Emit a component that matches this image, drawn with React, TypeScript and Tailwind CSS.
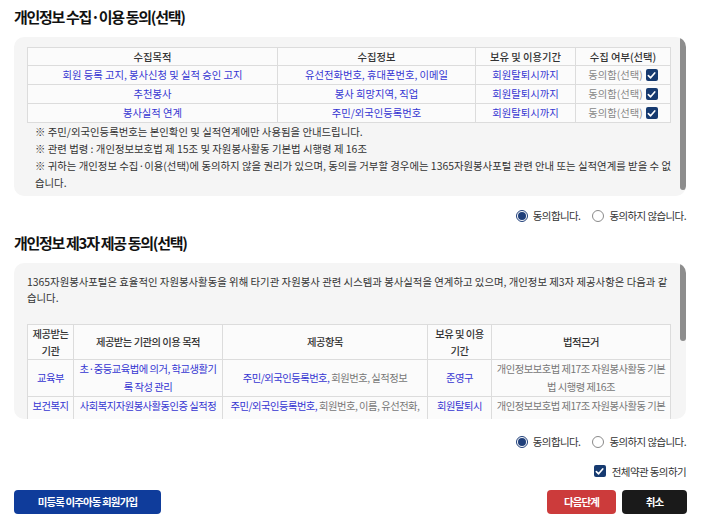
import React from 'react'

const FONT = '"Noto Sans CJK KR", "Noto Sans", sans-serif'

function Check() {
  return (
    <span className="inline-flex w-[12px] h-[12px] items-center justify-center bg-[#163a70] rounded-[2px] align-middle shrink-0">
      <svg width="9" height="9" viewBox="0 0 10 10">
        <path d="M1.5 5.2 L4 7.6 L8.6 2.2" fill="none" stroke="#fff" strokeWidth="1.8" strokeLinecap="round" strokeLinejoin="round" />
      </svg>
    </span>
  )
}

function Radio({ on }: { on?: boolean }) {
  return on ? (
    <span className="inline-flex w-[12px] h-[12px] rounded-full border border-[#1f3f7a] items-center justify-center bg-white">
      <span className="w-[8px] h-[8px] rounded-full bg-[#1f3f7a]" />
    </span>
  ) : (
    <span className="inline-block w-[12px] h-[12px] rounded-full border border-[#8a8a8a] bg-white" />
  )
}

function RadioRow() {
  return (
    <div className="flex justify-end items-center gap-[5px] text-[10.5px] text-[#333] tracking-[-0.6px]">
      <Radio on />
      <span className="mr-[7px]">동의합니다.</span>
      <Radio />
      <span>동의하지 않습니다.</span>
    </div>
  )
}

// scroll box with the thumb drawn over its right edge
function ScrollBox({ h, thumb, children, className }: { h: string; thumb: string; children: React.ReactNode; className: string }) {
  return (
    <div className={`relative ${h} bg-[#f5f5f5] rounded-[10px] overflow-hidden`}>
      <div className={`h-full overflow-hidden pl-[13px] pr-[10px] ${className}`}>{children}</div>
      <div className={`absolute right-0 top-0 w-[6px] ${thumb} rounded-full bg-[#8d8d8d]`} />
    </div>
  )
}

const rows1 = [
  ['회원 등록 고지, 봉사신청 및 실적 승인 고지', '유선전화번호, 휴대폰번호, 이메일'],
  ['추천봉사', '봉사 희망지역, 직업'],
  ['봉사실적 연계', '주민/외국인등록번호'],
]

const rows2 = [
  {
    org: '교육부',
    purpose: '초·중등교육법에 의거, 학교생활기록 작성 관리',
    blue: '주민/외국인등록번호,',
    rest: ' 회원번호, 실적정보',
    term: '준영구',
  },
  {
    org: '보건복지부',
    purpose: '사회복지자원봉사활동인증 실적정보 연계',
    blue: '주민/외국인등록번호,',
    rest: ' 회원번호, 이름, 유선전화, 이메일, 실적정보',
    term: '회원탈퇴시까지',
  },
  {
    org: '행정안전부',
    purpose: '자원봉사센터 봉사실적 관리 및 연계',
    blue: '주민/외국인등록번호,',
    rest: ' 회원번호, 이름, 실적정보',
    term: '회원탈퇴시까지',
  },
]

export default function App() {
  const th = 'border border-[#dcdcdc] font-medium text-[#333] px-[2px] leading-[17px]'
  const td1 = 'border border-[#dcdcdc] px-[2px] leading-[16px] py-0'
  const td2 = 'border border-[#dcdcdc] px-[2px] leading-[18px]'
  return (
    <div className="w-[704px] h-[527px] bg-white overflow-hidden" style={{ fontFamily: FONT }}>
      <div className="pl-[14px] pr-[18px] pt-[6px]">
        <h2 className="text-[15px] font-bold text-[#111] leading-[22px] tracking-[-1.3px]">개인정보 수집·이용 동의(선택)</h2>

        <div className="mt-[9px]">
          <ScrollBox h="h-[159px]" thumb="h-[153px]" className="pt-[10px]">
            <table className="w-[643px] border-collapse bg-[#fbfbfb] text-[10.3px] text-center table-fixed">
              <colgroup>
                <col className="w-[250px]" />
                <col className="w-[198px]" />
                <col className="w-[100px]" />
                <col className="w-[95px]" />
              </colgroup>
              <thead>
                <tr className="h-[18px]">
                  <th className={th}>수집목적</th>
                  <th className={th}>수집정보</th>
                  <th className={th}>보유 및 이용기간</th>
                  <th className={th}>수집 여부(선택)</th>
                </tr>
              </thead>
              <tbody>
                {rows1.map(r => (
                  <tr key={r[0]} className="h-[19px]">
                    <td className={`${td1} text-[#3535d2]`}>{r[0]}</td>
                    <td className={`${td1} text-[#3535d2]`}>{r[1]}</td>
                    <td className={`${td1} text-[#3535d2]`}>회원탈퇴시까지</td>
                    <td className={`${td1} text-[#888]`}>
                      <div className="flex items-center justify-center gap-[3px] h-[17px]">
                        <span>동의함(선택)</span> <Check />
                      </div>
                    </td>
                  </tr>
                ))}
              </tbody>
            </table>
            <div className="pl-[8px] text-[10.4px] text-[#333] leading-[17px]">
              <p>※ 주민/외국인등록번호는 본인확인 및 실적연계에만 사용됨을 안내드립니다.</p>
              <p>※ 관련 법령 : 개인정보보호법 제 15조 및 자원봉사활동 기본법 시행령 제 16조</p>
              <p>
                ※ 귀하는 개인정보 수집·이용(선택)에 동의하지 않을 권리가 있으며, 동의를 거부할 경우에는 1365자원봉사포털 관련 안내 또는 실적연계를 받을 수 없습니다.
              </p>
            </div>
          </ScrollBox>
        </div>

        <div className="mt-[12px]">
          <RadioRow />
        </div>

        <h2 className="mt-[8px] text-[15px] font-bold text-[#111] leading-[22px] tracking-[-1.3px]">개인정보 제3자 제공 동의(선택)</h2>

        <div className="mt-[9px]">
          <ScrollBox h="h-[156px]" thumb="h-[78px]" className="pt-[11px]">
            <p className="text-[10.4px] text-[#333] leading-[16px]">
              1365자원봉사포털은 효율적인 자원봉사활동을 위해 타기관 자원봉사 관련 시스템과 봉사실적을 연계하고 있으며, 개인정보 제3자 제공사항은 다음과 같습니다.
            </p>
            <table className="mt-[18px] w-[643px] border-collapse bg-[#fbfbfb] text-[10.3px] text-center table-fixed tracking-[-0.5px]">
              <colgroup>
                <col className="w-[46px]" />
                <col className="w-[149px]" />
                <col className="w-[205px]" />
                <col className="w-[64px]" />
                <col className="w-[179px]" />
              </colgroup>
              <thead>
                <tr className="h-[35px]">
                  <th className={th}>제공받는 기관</th>
                  <th className={th}>제공받는 기관의 이용 목적</th>
                  <th className={th}>제공항목</th>
                  <th className={`${th} px-[5px]`}>보유 및 이용 기간</th>
                  <th className={th}>법적근거</th>
                </tr>
              </thead>
              <tbody>
                {rows2.map(r => (
                  <tr key={r.org} className="h-[37px]">
                    <td className={`${td2} text-[#3535d2]`}>{r.org}</td>
                    <td className={`${td2} text-[#3535d2]`}>{r.purpose}</td>
                    <td className={`${td2} px-[4px] text-[#777]`}>
                      <span className="text-[#3535d2]">{r.blue}</span>
                      {r.rest}
                    </td>
                    <td className={`${td2} px-[6px] text-[#3535d2]`}>{r.term}</td>
                    <td className={`${td2} px-[4px] text-[#777]`}>개인정보보호법 제17조 자원봉사활동 기본법 시행령 제16조</td>
                  </tr>
                ))}
              </tbody>
            </table>
          </ScrollBox>
        </div>

        <div className="mt-[15px]">
          <RadioRow />
        </div>

        <div className="mt-[14px] flex justify-end items-center gap-[6px] text-[10.5px] text-[#333] tracking-[-0.6px]">
          <Check />
          <span>전체약관 동의하기</span>
        </div>

        <div className="mt-[11px] -mr-[1px] flex items-center tracking-[-0.9px]">
          <button className="w-[147px] h-[24px] rounded-[4px] bg-[#0f3c9b] text-white text-[10.5px] font-bold">
            미등록 이주아동 회원가입
          </button>
          <div className="ml-auto flex gap-[6px]">
            <button className="w-[69px] h-[24px] rounded-[4px] bg-[#cc3b3b] text-white text-[10.5px] font-bold">다음단계</button>
            <button className="w-[65px] h-[24px] rounded-[4px] bg-[#1a1a1a] text-white text-[10.5px] font-bold">취소</button>
          </div>
        </div>
      </div>
    </div>
  )
}
